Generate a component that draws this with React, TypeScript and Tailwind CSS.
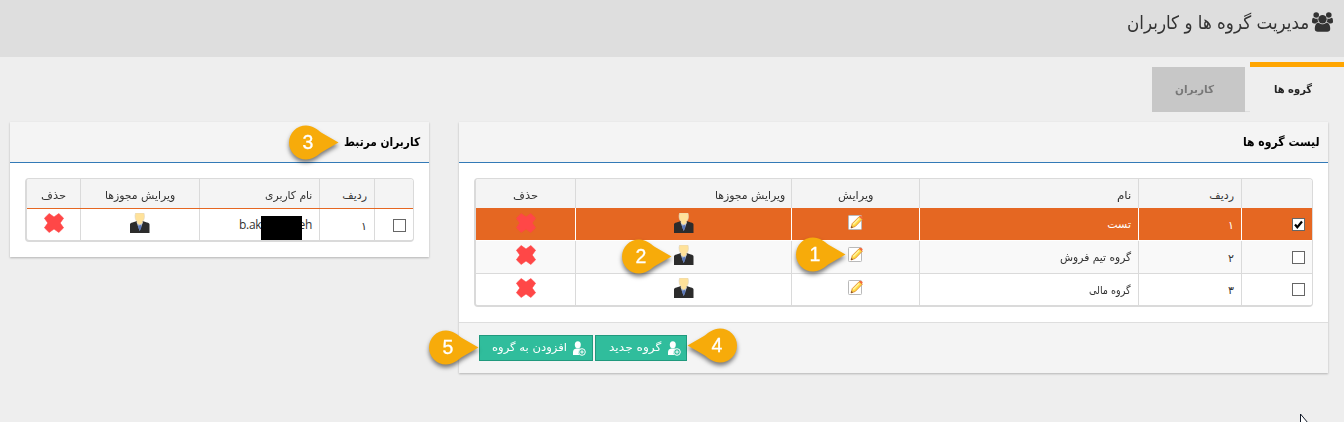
import { useLayoutEffect, useRef, useState, type ReactNode } from "react";

function Fit({ w, children, className = "" }: { w: number; children: ReactNode; className?: string }) {
  const ref = useRef<HTMLSpanElement>(null);
  const [scale, setScale] = useState(1);
  useLayoutEffect(() => {
    if (ref.current && ref.current.offsetWidth > 0) setScale(w / ref.current.offsetWidth);
  }, [w]);
  return (
    <span className={`flex justify-start whitespace-nowrap ${className}`} style={{ width: w }}>
      <span ref={ref} className="inline-block shrink-0 origin-right" style={{ transform: `scaleX(${scale})` }}>
        {children}
      </span>
    </span>
  );
}

function UsersIcon() {
  const side = "M593 640q-162 -5 -265 -128h-134q-82 0 -138 40.5t-56 118.5q0 353 124 353q6 0 43.5 -21t97.5 -42.5t119 -21.5q67 0 133 23q-5 -37 -5 -66q0 -139 81 -256z";
  return (
    <svg className="mt-[12px]" width="21" height="20" viewBox="0 -1536 1920 1792" fill="#333">
      <g transform="scale(1 -1)">
        <path d={side} />
        <path d={side} transform="translate(1920 0) scale(-1 1)" />
        <circle cx="384" cy="1280" r="256" />
        <circle cx="1536" cy="1280" r="256" />
        <circle cx="960" cy="896" r="384" />
        <path d="M1664 3q0 -120 -73 -189.5t-194 -69.5h-874q-121 0 -194 69.5t-73 189.5q0 53 3.5 103.5t14 109t26.5 108.5t43 97.5t62 81t85.5 53.5t111.5 20q10 0 43 -21.5t73 -48t107 -48t135 -21.5t135 21.5t107 48t73 48t43 21.5q61 0 111.5 -20t85.5 -53.5t62 -81t43 -97.5t26.5 -108.5t14 -109t3.5 -103.5z" />
      </g>
    </svg>
  );
}

function DeleteIcon() {
  return (
    <svg width="20" height="20" viewBox="0 0 20 20">
      <path d="M5.200 .5 10 4 14.800 .5 19.600 5.200 16.200 10 19.600 14.800 14.800 19.500 10 16 5.200 19.500 .4 14.800 3.800 10 .4 5.200Z" fill="#ff4747" stroke="#ff4747" strokeWidth=".6" strokeLinejoin="round" />
    </svg>
  );
}

function PersonIcon() {
  return (
    <svg width="20" height="20" viewBox="0 0 20 20">
      <path d="M0 20v-8.500c0-1.200 1-1.700 2.500-2L7 8h5.500l4.500 1.500c1.500.3 2.500.8 2.500 2V20Z" fill="#2c2c2c" />
      <path d="M6.800 10 9.700 18 12.700 10Z" fill="#aebfe2" />
      <path d="M9 11h1.500l1 3-1.700 4-1.700-4Z" fill="#5b78b8" />
      <path d="M5.600 0h8.300c.6 1.500.7 3.500.4 5-.2 1.500-.8 2.500-1.800 3.300V10L9.700 12 7 10V8.300C6 7.500 5.400 6.500 5.200 5c-.3-1.500-.2-3.500.4-5Z" fill="#ffe29a" stroke="#ddd5c2" strokeWidth=".6" />
    </svg>
  );
}

function EditIcon() {
  return (
    <svg width="16" height="17" viewBox="0 0 16 17">
      <rect x=".5" y="1.500" width="13" height="14" rx=".8" fill="#fff" stroke="#b9b9b9" />
      <path d="m3 14 1.300-4.500 7-7 3 2.700-7 7.200Z" fill="#ffdc45" stroke="#e18a35" strokeWidth=".9" />
      <path d="m11 2.700 1.200-1c1-.3 2.600 1 2.400 2l-.8 1.500Z" fill="#f36b3c" />
      <path d="m4.600 10 6-6 1 1-5.800 6Z" fill="#fff3a0" />
      <path d="m3 14 .6-2 1.400 1.300Z" fill="#5b3921" />
    </svg>
  );
}

function AddUserIcon() {
  return (
    <svg width="13" height="15" viewBox="0 0 13 15">
      <ellipse cx="4.800" cy="3.700" rx="3" ry="3.500" fill="#fff" />
      <path d="M0 14V11c0-2 1.500-3.200 3.200-3.500h3.500l1.500.5a4 4 0 0 0-2 6Z" fill="#fff" />
      <circle cx="9" cy="11" r="3.300" fill="#30bd9c" stroke="#fff" />
      <path d="M9 9.300v3.400M7.300 11h3.400" stroke="#fff" />
    </svg>
  );
}

function Box({ checked = false }: { checked?: boolean }) {
  return (
    <span className="block h-[13px] w-[13px] border border-[#666] bg-white">
      {checked && (
        <svg width="11" height="11" viewBox="0 0 11 11">
          <path d="m2 5.500 2.300 2.800L9 2.500" fill="none" stroke="#000" strokeWidth="2.200" />
        </svg>
      )}
    </span>
  );
}

function Pin({ n, place, flip = false }: { n: string; place: string; flip?: boolean }) {
  return (
    <svg className={`absolute overflow-visible drop-shadow-[0_3px_2px_rgba(0,0,0,0.5)] ${place}`} width="50" height="35" viewBox="0 0 50 35">
      <path
        transform={flip ? "translate(50 0) scale(-1 1)" : undefined}
        d="M17 .5a17 17 0 1 0 0 34c7 0 11-4 16-7.500L49.500 17.500 33 8C28 4.500 24 .5 17 .5Z"
        fill="#f7ab0a"
      />
      <text x={flip ? 30 : 19} y="24" textAnchor="middle" fontSize="19.500" fill="#fff" stroke="#fff" strokeWidth=".3" className="font-['Liberation_Sans',sans-serif]">{n}</text>
    </svg>
  );
}

const groupCols = "grid grid-cols-[71px_103px_219px_128px_216px_99px]";
const userCols = "grid grid-cols-[39px_55px_120px_119px_53px]";

const rows = [
  { n: "۱", name: "تست", w: 24, style: "h-8 bg-[#e56722] text-white", line: "border-white", icon: "pt-[5px]", edit: "pt-[6px]" },
  { n: "۲", name: "گروه تیم فروش", w: 71, style: "h-[33px] border-t border-white bg-[#f9f9f9]", line: "border-[#dadada]", icon: "pt-[4px]", edit: "pt-[5px]" },
  { n: "۳", name: "گروه مالی", w: 42, style: "h-8 border-t border-[#dadada] bg-white", line: "border-[#dadada]", icon: "pt-[4px]", edit: "pt-[5px]" },
];

export default function App() {
  return (
    <div dir="rtl" className="relative flex h-[422px] w-[1344px] flex-col overflow-hidden bg-[#eee] font-['DejaVu_Sans',sans-serif] text-[11px] text-[#333]">
      <header className="flex h-[57px] shrink-0 items-start bg-[#dedede] pr-[11px]">
        <UsersIcon />
        <h1 className="mr-[3px] mt-[8px] text-[18.5px] leading-[30px]"><Fit w={182}>مدیریت گروه ها و کاربران</Fit></h1>
      </header>

      <nav className="flex h-[65px] shrink-0 items-start pt-[5px] font-bold">
        <div className="flex h-[50px] w-[94px] items-center border-t-[5px] border-[#ffa500] pr-[32px] pt-[2px] text-[#222]"><Fit w={38}>گروه ها</Fit></div>
        <div className="h-[50px] w-[5px] border-b border-[#dedede]" />
        <div className="mt-[5px] flex h-[45px] w-[93px] items-center bg-[#c7c7c7] pr-[31px] pt-[2px] text-[#777]"><Fit w={39}>کاربران</Fit></div>
      </nav>

      <main className="flex items-start gap-[30px] pr-[16px]">
        <section className="w-[869px] bg-white shadow-[0_1px_2px_rgba(0,0,0,0.25)]">
          <h2 className="flex h-[41px] items-center border-b border-[#337ab7] bg-[#f4f4f4] pr-[9px] text-xs font-bold text-black"><Fit w={77}>لیست گروه ها</Fit></h2>
          <div className="px-[15px] pt-[15px] pb-[15px]">
            <div className="overflow-hidden rounded border border-b-2 border-l-2 border-[#dadada]">
              <div className={`${groupCols} h-[29px] bg-[#f4f4f4] leading-[17px]`}>
                <div className="border-l border-[#dadada]" />
                <div className="flex items-center border-l border-[#dadada] pr-[7px] pt-[3px]"><Fit w={25}>ردیف</Fit></div>
                <div className="flex items-center border-l border-[#dadada] pr-[7px] pt-[3px]"><Fit w={14}>نام</Fit></div>
                <div className="flex items-center justify-center border-l border-[#dadada] pt-[3px]"><Fit w={36}>ویرایش</Fit></div>
                <div className="flex items-center border-l border-[#dadada] pr-[6px] pt-[3px]"><Fit w={70}>ویرایش مجوزها</Fit></div>
                <div className="flex items-center justify-center pt-[3px]"><Fit w={25}>حذف</Fit></div>
              </div>
              {rows.map((r, i) => (
                <div key={r.n} className={`${groupCols} ${r.style}`}>
                  <div className={`flex items-center border-l pr-[7px] ${r.line}`}><Box checked={i === 0} /></div>
                  <div className={`flex items-center border-l pr-[7px] pt-[4px] ${r.line}`}>{r.n}</div>
                  <div className={`flex items-center border-l pr-[7px] pt-[3px] ${r.line}`}><Fit w={r.w}>{r.name}</Fit></div>
                  <div className={`flex justify-center border-l ${r.edit} ${r.line}`}><EditIcon /></div>
                  <div className={`flex justify-center border-l ${r.icon} ${r.line}`}><PersonIcon /></div>
                  <div className={`flex justify-center ${r.icon}`}><DeleteIcon /></div>
                </div>
              ))}
            </div>
          </div>
          <footer className="flex h-[51px] items-start justify-end gap-[2px] border-t border-[#dedede] bg-[#f4f4f4] pt-[12px] pl-[20px] text-white">
            <button className="flex h-[26px] w-[92px] items-center gap-[7px] border border-[#20997d] bg-[#30bd9c] pr-[5px]"><AddUserIcon /><Fit w={52} className="pt-px">گروه جدید</Fit></button>
            <button className="flex h-[26px] w-[114px] items-center gap-[6px] border border-[#20997d] bg-[#30bd9c] pr-[6px]"><AddUserIcon /><Fit w={75} className="pt-px">افزودن به گروه</Fit></button>
          </footer>
        </section>

        <section className="w-[419px] bg-white shadow-[0_1px_2px_rgba(0,0,0,0.25)]">
          <h2 className="flex h-[41px] items-center border-b border-[#337ab7] bg-[#f4f4f4] pr-[9px] text-xs font-bold text-black"><Fit w={76}>کاربران مرتبط</Fit></h2>
          <div className="px-[15px] pt-[15px] pb-[15px]">
            <div className="overflow-hidden rounded border border-b-2 border-l-2 border-[#dadada]">
              <div className={`${userCols} h-[30px] border-b border-[#e56722] bg-[#f4f4f4] leading-[17px]`}>
                <div className="border-l border-[#dadada]" />
                <div className="flex items-center border-l border-[#dadada] pr-[7px] pt-[3px]"><Fit w={25}>ردیف</Fit></div>
                <div className="flex items-center border-l border-[#dadada] pr-[7px] pt-[3px]"><Fit w={47}>نام کاربری</Fit></div>
                <div className="flex items-center justify-center border-l border-[#dadada] pt-[3px]"><Fit w={70}>ویرایش مجوزها</Fit></div>
                <div className="flex items-center justify-center pt-[3px]"><Fit w={25}>حذف</Fit></div>
              </div>
              <div className={`${userCols} h-[31px]`}>
                <div className="flex items-center border-l border-[#dadada] pr-[7px]"><Box /></div>
                <div className="flex items-center border-l border-[#dadada] pr-[7px] pt-[4px]">۱</div>
                <div dir="ltr" className="flex items-center justify-end border-l border-[#dadada] pr-[7px] font-['Open_Sans',sans-serif] text-[12px] tracking-[-0.25px]">
                  <span>b.ak</span><span className="relative z-10 -mr-[4px] mt-[7px] h-[25px] w-[41px] bg-black" /><span>eh</span>
                </div>
                <div className="flex justify-center border-l border-[#dadada] pt-[4px]"><PersonIcon /></div>
                <div className="flex justify-center pt-[4px]"><DeleteIcon /></div>
              </div>
            </div>
          </div>
        </section>
      </main>

      <Pin n="1" place="left-[796px] top-[237px]" />
      <Pin n="2" place="left-[622px] top-[239px]" />
      <Pin n="3" place="left-[289px] top-[125px]" />
      <Pin n="4" place="left-[687px] top-[328px]" flip />
      <Pin n="5" place="left-[429px] top-[330px]" />
      <svg className="absolute left-[1300px] top-[413px]" width="12" height="19" viewBox="0 0 12 19">
        <path d="M.5 1v16l4-4h6Z" fill="#fff" stroke="#111827" />
      </svg>
    </div>
  );
}
